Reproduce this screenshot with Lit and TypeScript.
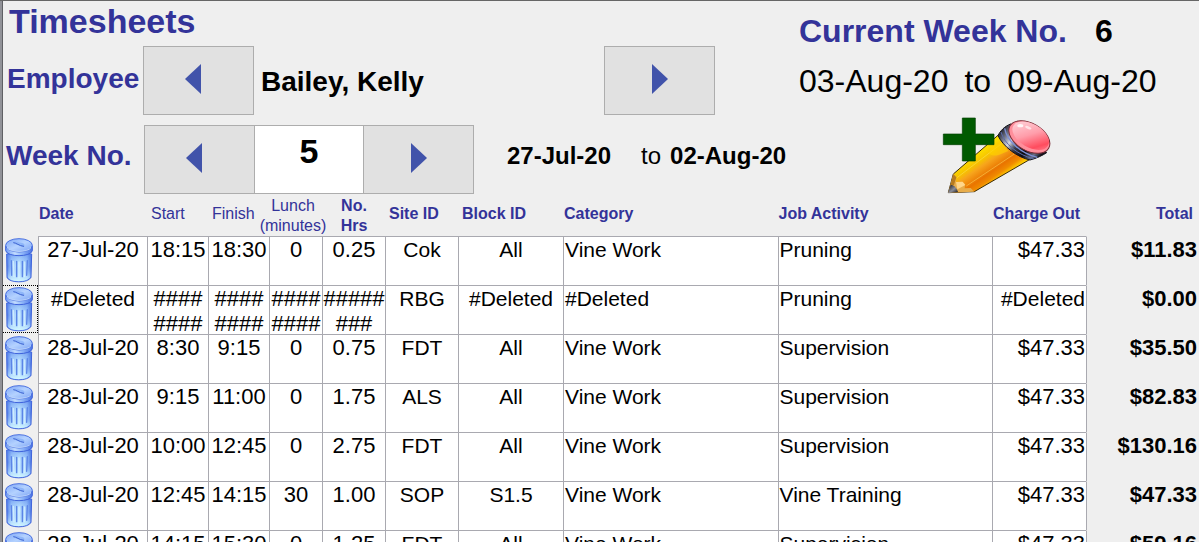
import { LitElement, html, css, svg } from "lit";
import { customElement, property, state } from "lit/decorators.js";
import { classMap } from "lit/directives/class-map.js";

interface Entry {
  date: string;
  start: string;
  finish: string;
  lunch: string;
  hours: string;
  site: string;
  block: string;
  category: string;
  activity: string;
  charge: string;
  total: string;
}

const HASH = "########";

const ENTRIES: Entry[] = [
  { date: "27-Jul-20", start: "18:15", finish: "18:30", lunch: "0", hours: "0.25", site: "Cok", block: "All", category: "Vine Work", activity: "Pruning", charge: "$47.33", total: "$11.83" },
  { date: "#Deleted", start: HASH, finish: HASH, lunch: HASH, hours: HASH, site: "RBG", block: "#Deleted", category: "#Deleted", activity: "Pruning", charge: "#Deleted", total: "$0.00" },
  { date: "28-Jul-20", start: "8:30", finish: "9:15", lunch: "0", hours: "0.75", site: "FDT", block: "All", category: "Vine Work", activity: "Supervision", charge: "$47.33", total: "$35.50" },
  { date: "28-Jul-20", start: "9:15", finish: "11:00", lunch: "0", hours: "1.75", site: "ALS", block: "All", category: "Vine Work", activity: "Supervision", charge: "$47.33", total: "$82.83" },
  { date: "28-Jul-20", start: "10:00", finish: "12:45", lunch: "0", hours: "2.75", site: "FDT", block: "All", category: "Vine Work", activity: "Supervision", charge: "$47.33", total: "$130.16" },
  { date: "28-Jul-20", start: "12:45", finish: "14:15", lunch: "30", hours: "1.00", site: "SOP", block: "S1.5", category: "Vine Work", activity: "Vine Training", charge: "$47.33", total: "$47.33" },
  { date: "28-Jul-20", start: "14:15", finish: "15:30", lunch: "0", hours: "1.25", site: "FDT", block: "All", category: "Vine Work", activity: "Supervision", charge: "$47.33", total: "$59.16" },
];

@customElement("arrow-button")
export class ArrowButton extends LitElement {
  @property() direction: "previous" | "next" = "next";
  @property() label = "";

  static styles = css`
    :host {
      display: block;
      flex: none;
      width: 111px;
      height: 69px;
    }
    .button {
      display: flex;
      align-items: center;
      justify-content: center;
      box-sizing: border-box;
      width: 100%;
      height: 100%;
      margin: 0;
      padding: 0 0 4px;
      border: 1px solid #adadad;
      border-radius: 0;
      background: #e1e1e1;
    }
    .previous {
      padding-right: 12px;
    }
    .arrow {
      width: 16px;
      height: 30px;
      fill: #4153aa;
    }
  `;

  render() {
    const previous = this.direction === "previous";
    return html`<button class=${classMap({ button: true, previous })} type="button" aria-label=${this.label}>
      <svg class="arrow" viewBox="0 0 16 30" aria-hidden="true">
        ${previous ? svg`<path d="M16 0V30L0 15Z" />` : svg`<path d="M0 0V30L16 15Z" />`}
      </svg>
    </button>`;
  }
}

@customElement("trash-icon")
export class TrashIcon extends LitElement {
  static styles = css`
    :host {
      display: block;
    }
    .icon {
      display: block;
      width: 28px;
      height: 45px;
    }
  `;

  render() {
    return html`<svg class="icon" viewBox="0 0 84 135" aria-hidden="true">
      <defs>
        <linearGradient id="can" x1="0" x2="1">
          <stop offset="0" stop-color="#4a78e6" />
          <stop offset=".2" stop-color="#a4ccfc" />
          <stop offset=".5" stop-color="#bde4ff" />
          <stop offset=".8" stop-color="#98c2fa" />
          <stop offset="1" stop-color="#4570e0" />
        </linearGradient>
        <linearGradient id="shine" x1="0" x2="0" y1="0" y2="1">
          <stop offset="0" stop-color="#4f7ce8" stop-opacity=".5" />
          <stop offset=".45" stop-color="#8fc0ff" stop-opacity="0" />
          <stop offset="1" stop-color="#d6fbff" stop-opacity=".85" />
        </linearGradient>
        <linearGradient id="rim" x1="0" x2="1">
          <stop offset="0" stop-color="#6c97f2" />
          <stop offset=".35" stop-color="#c4deff" />
          <stop offset=".65" stop-color="#8ab2f8" />
          <stop offset="1" stop-color="#4a72e2" />
        </linearGradient>
        <linearGradient id="lid" x1="0" x2="1" y1="0" y2="1">
          <stop offset="0" stop-color="#7ea6f6" />
          <stop offset=".5" stop-color="#b4d2ff" />
          <stop offset="1" stop-color="#7ba2f4" />
        </linearGradient>
      </defs>
      <path d="M5 48 6 118C12 136 70 136 78 118L80 48Z" fill="url(#can)" stroke="#3f64dc" stroke-width="3" />
      <path d="M7 48 8 117C16 133 66 133 76 117L78 48Z" fill="url(#shine)" />
      <g fill="none" stroke-linecap="round">
        <path d="M19 68 20 112M35 70V116M52 70V116M67 68 65 112" stroke="#5b84e6" stroke-width="4" />
        <path d="M25 70 27 116M42 72V120M59 72V116" stroke="#e0f7ff" stroke-width="4" opacity=".7" />
      </g>
      <path d="M2 24V38C6 58 78 58 82 38V24Z" fill="url(#rim)" stroke="#3f64dc" stroke-width="3" />
      <ellipse cx="42" cy="22" rx="40" ry="20" fill="url(#lid)" stroke="#4a70e0" stroke-width="3" />
      <path d="M6 29C14 44 70 44 78 29" fill="none" stroke="#d2e7ff" stroke-width="3" opacity=".8" />
      <path d="M24 12C32 8 40 13 48 14C58 15 62 22 56 26C48 28 42 20 32 19Z" fill="#8fb6f9" />
      <path d="M26 14C34 14 42 24 56 25" fill="none" stroke="#3c62d0" stroke-width="3" stroke-linecap="round" />
    </svg>`;
  }
}

@customElement("add-pencil-icon")
export class AddPencilIcon extends LitElement {
  static styles = css`
    :host {
      display: block;
    }
    .icon {
      display: block;
      width: 112px;
      height: 80px;
    }
  `;

  render() {
    return html`<svg class="icon" viewBox="30 30 336 240" aria-hidden="true">
      <defs>
        <linearGradient id="wood" gradientUnits="userSpaceOnUse" x1="135" y1="135" x2="200" y2="228">
          <stop offset="0" stop-color="#ffe800" />
          <stop offset=".32" stop-color="#f6c200" />
          <stop offset=".45" stop-color="#f7a51c" />
          <stop offset=".72" stop-color="#e97400" />
          <stop offset=".86" stop-color="#f08a00" />
          <stop offset="1" stop-color="#ffd000" />
        </linearGradient>
        <linearGradient id="ferrule" gradientUnits="userSpaceOnUse" x1="215" y1="70" x2="325" y2="160">
          <stop offset="0" stop-color="#1b1c24" />
          <stop offset=".18" stop-color="#787d90" />
          <stop offset=".32" stop-color="#d2d6e2" />
          <stop offset=".48" stop-color="#3a3d4a" />
          <stop offset=".7" stop-color="#08080c" />
          <stop offset=".88" stop-color="#6a7188" />
          <stop offset="1" stop-color="#101018" />
        </linearGradient>
        <linearGradient id="rubber" gradientUnits="userSpaceOnUse" x1="255" y1="60" x2="340" y2="140">
          <stop offset="0" stop-color="#ffd3da" />
          <stop offset=".45" stop-color="#ff9daa" />
          <stop offset=".8" stop-color="#ff4c5e" />
          <stop offset="1" stop-color="#ff8290" />
        </linearGradient>
        <linearGradient id="lead" x1="0" x2="1" y1="0" y2="1">
          <stop offset="0" stop-color="#15151a" />
          <stop offset=".55" stop-color="#8b8d98" />
          <stop offset="1" stop-color="#101014" />
        </linearGradient>
      </defs>
      <path d="M55 263 70 207 205 90 300 163 133 260Z" fill="url(#wood)" stroke="#3b2a08" stroke-width="3" />
      <path d="M81 218 220 112M109 243 262 141" fill="none" stroke="#ffe36a" stroke-width="2" opacity=".7" />
      <path d="M184 126 214 112 235 138 206 150C190 154 176 150 178 140Z" fill="#ffcf00" opacity=".65" />
      <path d="M70 207 79 216 78 232 96 230 105 238 104 250 122 249 133 260 55 263Z" fill="#e8ad4b" />
      <path d="M70 207 79 217 72 240 60 246Z" fill="#b77b20" />
      <path d="M78 231 98 230 106 240 82 253Z" fill="#ffd68a" />
      <path d="M54 264 62 240C72 240 80 248 84 261Z" fill="url(#lead)" />
      <path d="M242 57C225 63 210 78 204 92C220 125 262 157 300 165C320 160 338 151 350 143Z" fill="url(#ferrule)" stroke="#15151c" stroke-width="3" />
      <path d="M224 70C230 105 270 145 322 157" fill="none" stroke="#7d8fd6" stroke-width="4" />
      <path d="M213 81C222 115 262 150 311 161" fill="none" stroke="#5b6cae" stroke-width="3" />
      <ellipse cx="298" cy="96" rx="67" ry="41" transform="rotate(30 298 96)" fill="#ff8e9b" stroke="#7a2a34" stroke-width="3" />
      <ellipse cx="302" cy="92" rx="60" ry="35" transform="rotate(30 302 92)" fill="url(#rubber)" />
      <ellipse cx="271" cy="62" rx="9" ry="5" fill="#fff" opacity=".85" />
      <ellipse cx="295" cy="68" rx="10" ry="4" transform="rotate(20 295 68)" fill="#fff" opacity=".6" />
      <path d="M97 39H136V87H192V119H136V168H97V119H40V87H97Z" fill="#005a00" stroke="#003f00" stroke-width="2" />
    </svg>`;
  }
}

@customElement("app-root")
export class TimesheetsApp extends LitElement {
  @state() private selected = 1;

  static styles = css`
    :host {
      display: block;
      box-sizing: border-box;
      height: 100vh;
      overflow: hidden;
      border-top: 1px solid #666;
      background: #efefef;
      color: #000;
      font-family: "Liberation Sans", Arial, sans-serif;
    }
    .form {
      box-sizing: border-box;
      min-height: 100%;
      border-left: 2px solid #919298;
      box-shadow: inset 1px 0 #5f6064;
      padding-left: 1px;
    }
    .header {
      display: flex;
    }
    .selection {
      flex: 1;
      min-width: 0;
    }
    .title {
      height: 45px;
      margin: 0;
      padding-left: 6px;
      font-size: 34px;
      line-height: 40px;
      font-weight: bold;
      color: #333399;
    }
    .line {
      display: flex;
      align-items: center;
      height: 69px;
      margin-bottom: 10px;
    }
    .line:last-child {
      margin-bottom: 0;
    }
    .label {
      flex: none;
      box-sizing: border-box;
      width: 140px;
      padding: 0 0 4px 4px;
      font-size: 28px;
      line-height: 32px;
      font-weight: bold;
      color: #333399;
      white-space: nowrap;
    }
    .week-label {
      width: 141px;
      padding: 0 0 8px 3px;
    }
    .employee {
      flex: 0 1 350px;
      box-sizing: border-box;
      padding-left: 7px;
      padding-top: 2px;
      font-size: 28px;
      line-height: 32px;
      font-weight: bold;
      white-space: nowrap;
    }
    .week {
      flex: none;
      box-sizing: border-box;
      width: 108px;
      height: 69px;
      margin: 0;
      padding: 0 0 16px;
      border: solid #adadad;
      border-width: 1px 0;
      border-radius: 0;
      background: #fff;
      color: #000;
      font: bold 34px "Liberation Sans", Arial, sans-serif;
      text-align: center;
    }
    .range {
      display: flex;
      padding: 0 0 8px 33px;
      font-size: 24px;
      line-height: 28px;
      font-weight: bold;
      white-space: nowrap;
    }
    .to {
      padding: 0 9px 0 30px;
      font-weight: normal;
    }
    .current {
      flex: none;
      width: 400px;
      font-size: 32px;
      line-height: 36px;
      white-space: nowrap;
    }
    .current-week {
      display: flex;
      gap: 28px;
      padding-top: 12px;
      font-weight: bold;
    }
    .current-label {
      color: #333399;
    }
    .current-dates {
      display: flex;
      gap: 16px;
      padding-top: 14px;
    }
    .add {
      display: block;
      margin: 16px 0 0 141px;
      padding: 0;
      border: 0;
      background: none;
    }
    .entries {
      width: 100%;
      table-layout: fixed;
      border-collapse: separate;
      border-spacing: 0;
    }
    .c-delete { width: 35px; }
    .c-date { width: 109px; }
    .c-time { width: 61px; }
    .c-lunch { width: 53px; }
    .c-hours { width: 63px; }
    .c-site { width: 73px; }
    .c-block { width: 105px; }
    .c-charge { width: 94px; }
    .c-total { width: 113px; }
    .head {
      height: 41px;
      padding: 0 0 4px 1px;
      box-sizing: border-box;
      font-size: 16px;
      line-height: 20px;
      color: #333399;
      text-align: left;
      white-space: nowrap;
    }
    .indent {
      padding-left: 4px;
    }
    .light {
      font-weight: normal;
    }
    .middle {
      text-align: center;
      padding-bottom: 0;
    }
    .spill {
      display: flex;
      justify-content: center;
      padding-right: 6px;
    }
    .end {
      text-align: right;
      padding-right: 6px;
    }
    .cell {
      padding: 0;
      border: solid #a9a9b0;
      border-width: 1px 0 0 1px;
      background: #fff;
      font-size: 22px;
      line-height: 25px;
      text-align: center;
      vertical-align: top;
    }
    .text {
      font-size: 21px;
    }
    .left {
      text-align: left;
    }
    .right {
      text-align: right;
    }
    .value {
      height: 48px;
      padding: 0 1px;
    }
    .filled {
      padding: 0;
      word-break: break-all;
    }
    .total {
      border-top-color: transparent;
      background: #efefef;
      background-clip: padding-box;
      font-weight: bold;
    }
    .total .value {
      padding-right: 2px;
    }
    .delete-cell {
      padding: 0;
      vertical-align: top;
    }
    .delete {
      display: block;
      box-sizing: border-box;
      width: 35px;
      height: 48px;
      margin: 0;
      padding: 0 0 0 2px;
      border: 1px dotted transparent;
      border-left: 0;
      background: none;
    }
    .chosen {
      border-color: #000;
    }
  `;

  private cell(value: string, kind = "") {
    const filled = value === HASH;
    return html`<td class="cell ${kind}"><div class=${classMap({ value: true, filled })}>${value}</div></td>`;
  }

  private row(entry: Entry, index: number) {
    const dateKind = entry.date.startsWith("#") ? "text" : "";
    const chargeKind = entry.charge.startsWith("#") ? "right text" : "right";
    return html`<tr>
      <td class="delete-cell">
        <button
          class=${classMap({ delete: true, chosen: index === this.selected })}
          type="button"
          aria-label="Delete entry"
          @click=${() => (this.selected = index)}
        ><trash-icon></trash-icon></button>
      </td>
      ${this.cell(entry.date, dateKind)} ${this.cell(entry.start)} ${this.cell(entry.finish)}
      ${this.cell(entry.lunch)} ${this.cell(entry.hours)} ${this.cell(entry.site, "text")}
      ${this.cell(entry.block, "text")} ${this.cell(entry.category, "text left")}
      ${this.cell(entry.activity, "text left")} ${this.cell(entry.charge, chargeKind)}
      ${this.cell(entry.total, "right total")}
    </tr>`;
  }

  render() {
    return html`<main class="form">
      <header class="header">
        <div class="selection">
          <h1 class="title">Timesheets</h1>
          <div class="line">
            <span class="label">Employee</span>
            <arrow-button direction="previous" label="Previous employee"></arrow-button>
            <span class="employee">Bailey, Kelly</span>
            <arrow-button direction="next" label="Next employee"></arrow-button>
          </div>
          <div class="line">
            <label class="label week-label" for="week">Week No.</label>
            <arrow-button direction="previous" label="Previous week"></arrow-button>
            <input class="week" id="week" type="text" .value=${"5"} />
            <arrow-button direction="next" label="Next week"></arrow-button>
            <div class="range"><span>27-Jul-20</span><span class="to">to</span><span>02-Aug-20</span></div>
          </div>
        </div>
        <section class="current">
          <div class="current-week"><span class="current-label">Current Week No.</span><span>6</span></div>
          <div class="current-dates"><span>03-Aug-20</span><span>to</span><span>09-Aug-20</span></div>
          <button class="add" type="button" aria-label="Add entry"><add-pencil-icon></add-pencil-icon></button>
        </section>
      </header>
      <table class="entries">
        <colgroup>
          <col class="c-delete" /><col class="c-date" /><col class="c-time" /><col class="c-time" />
          <col class="c-lunch" /><col class="c-hours" /><col class="c-site" /><col class="c-block" />
          <col /><col /><col class="c-charge" /><col class="c-total" />
        </colgroup>
        <thead>
          <tr>
            <td class="head"></td>
            <th class="head" scope="col">Date</th>
            <th class="head light indent" scope="col">Start</th>
            <th class="head light indent" scope="col">Finish</th>
            <th class="head light middle" scope="col"><div class="spill"><span>Lunch<br />(minutes)</span></div></th>
            <th class="head middle" scope="col">No.<br />Hrs</th>
            <th class="head indent" scope="col">Site ID</th>
            <th class="head indent" scope="col">Block ID</th>
            <th class="head" scope="col">Category</th>
            <th class="head" scope="col">Job Activity</th>
            <th class="head end" scope="col">Charge Out</th>
            <th class="head end" scope="col">Total</th>
          </tr>
        </thead>
        <tbody>
          ${ENTRIES.map((entry, index) => this.row(entry, index))}
        </tbody>
      </table>
    </main>`;
  }
}
